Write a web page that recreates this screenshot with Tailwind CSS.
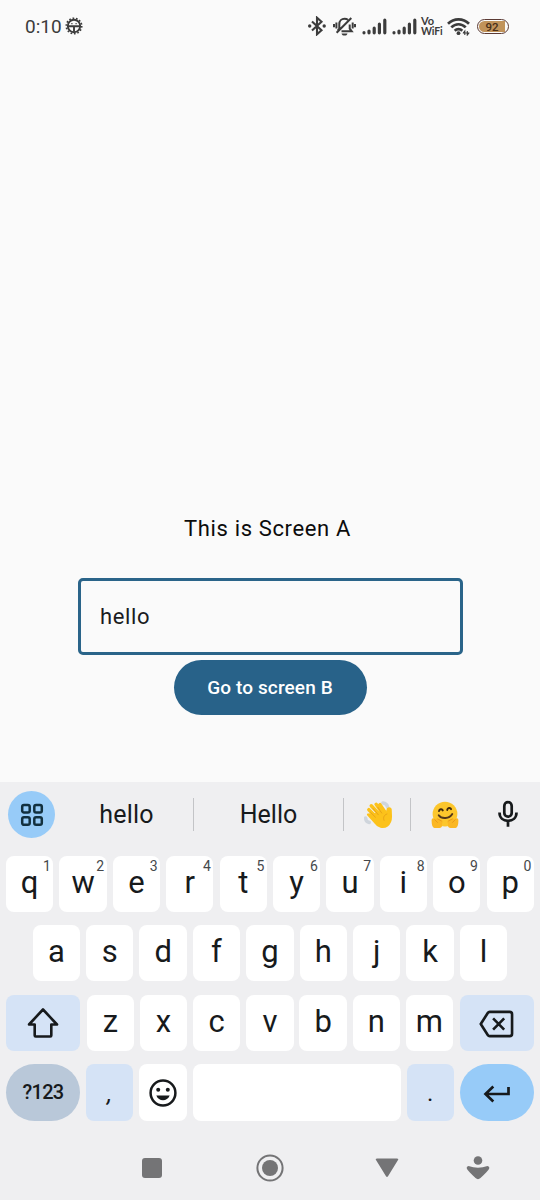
<!DOCTYPE html>
<html lang="en">
<head>
<meta charset="utf-8">
<title>Screen A</title>
<script src="https://cdn.jsdelivr.net/npm/@tailwindcss/browser@4"></script>
</head>
<body class="w-[540px] h-[1200px] overflow-hidden bg-[#fafafa] font-[Roboto,sans-serif] flex flex-col">
<header class="h-[52px] shrink-0 flex items-center pl-[25px] pr-[31px] text-[#3c3c3c]">
  <span class="text-[19px] leading-[22px] mt-[2px]">0:10</span>
  <svg class="ml-[3px]" width="18" height="18" viewBox="0 0 18 18" fill="none" stroke="currentColor"><circle cx="9" cy="9" r="6.2" stroke-width="1.900"/><circle cx="9" cy="9" r="7.700" stroke-width="1.700" stroke-dasharray="1.700 1.755"/><path d="M3 9.200h12M9 9.200v5.500" stroke-width="1.900"/><path d="M6.300 6.600h1.200M10.500 6.600h1.200" stroke-width="1.300"/></svg>
  <div class="ml-auto flex items-center">
    <svg width="18" height="20" viewBox="0 0 18 20" fill="none" stroke="currentColor" stroke-width="2.100"><path d="M4 5.500l9.500 8.800L9 18.300V1.700l4.500 4L4 14.500"/><circle cx="1.700" cy="10" r="1.700" fill="currentColor" stroke="none"/><circle cx="16.200" cy="10" r="1.700" fill="currentColor" stroke="none"/></svg>
    <svg class="ml-[7px]" width="23" height="20" viewBox="0 0 23 20" fill="none" stroke="currentColor" stroke-width="2"><path d="M6.300 12.500V8.200c0-3.500 2.400-5.400 5.200-5.400 1.400 0 2.500.3 3.400 1M16.700 8.500v4.200l2 2.600H8.500M3.600 16.800L18.300 2M6.300 12.500l-1.700 2.300M3.400 6.500v6M1 8v3.200M19.700 6.500v6M22 8v3.200"/><path d="M8.500 17.400h6c-.5 1.500-1.500 2.200-3 2.200s-2.500-.7-3-2.200z" fill="currentColor" stroke="none"/></svg>
    <svg class="ml-[6px]" width="25" height="18" viewBox="0 0 25 18" fill="none" stroke="currentColor" stroke-width="3.200" stroke-linecap="round"><path d="M2 15.700v.1M7 14v1.800M12.200 11.200v4.600M17.400 7.200v8.600M22.800 3.200v12.600"/></svg>
    <svg class="ml-[5px]" width="25" height="18" viewBox="0 0 25 18" fill="none" stroke="currentColor" stroke-width="3.200" stroke-linecap="round"><path d="M2 15.700v.1M7 14v1.800M12.200 11.200v4.600M17.400 7.200v8.600M22.800 3.200v12.600"/></svg>
    <div class="ml-[4px] w-[21px] flex flex-col text-[10.500px] leading-[11px] font-bold font-[Lato,sans-serif]"><span class="text-[11px]">Vo</span><span class="tracking-[-0.200px]">WiFi</span></div>
    <svg class="ml-[5px]" width="24" height="19" viewBox="0 0 24 19" fill="none" stroke="currentColor" stroke-width="2.700"><path d="M1 6.800c6-6 15-6 21 0M4.300 10.400c4.200-4.200 10.200-4.200 14.400 0M7.700 13.700c2.200-2.200 5.400-2.200 7.600 0"/><circle cx="11.500" cy="16.200" r="1.900" fill="currentColor" stroke="none"/><path d="M17.800 18v-4l-1.600 2M20.300 14v4l1.700-2M15.800 16h6.600" stroke-width="1.100"/></svg>
    <div class="ml-[6px] w-[32px] h-[15px] rounded-full border border-[#5b3a34] p-px flex"><span class="w-[26px] h-[11px] rounded-l-full rounded-r-[2px] bg-[#c1935a] text-[11.500px] leading-[12px] font-medium text-center text-[#4a2f18]">92</span></div>
  </div>
</header>

<main class="h-[730px] shrink-0 flex flex-col items-center">
  <h1 class="mt-[462px] h-[30px] -ml-[5px] text-[22px] leading-[30px] tracking-[0.640px] text-[#0c0c0c] whitespace-nowrap">This is Screen A</h1>
  <div class="mt-[34px] w-[385px] h-[77px] rounded-[5px] border-[3px] border-[#2a6489] flex items-center pl-[19.500px] text-[22px] tracking-[0.600px] text-[#1b1c1e]">hello</div>
  <button class="mt-[5px] w-[193px] h-[55px] pt-[2px] rounded-full bg-[#286289] text-white text-[19px] font-medium tracking-[0.120px]">Go to screen B</button>
</main>

<section class="h-[418px] shrink-0 bg-[#efeff1] text-[#171a1c]">
  <div class="h-[65px] flex items-center pl-[8px] pr-[22px] text-[25px]">
    <div class="size-[47px] rounded-full bg-[#97cbf8] flex items-center justify-center">
      <svg width="24" height="24" viewBox="0 0 24 24" fill="none" stroke="#12303f" stroke-width="2.500"><rect x="2.200" y="2" width="7.500" height="7.500" rx="1.800"/><rect x="14.300" y="2" width="7.500" height="7.500" rx="1.800"/><rect x="2.200" y="14.300" width="7.500" height="7.500" rx="1.800"/><rect x="14.300" y="14.300" width="7.500" height="7.500" rx="1.800"/></svg>
    </div>
    <span class="w-[138px] pl-[5px] pt-px text-center tracking-[0.200px]">hello</span>
    <i class="w-px h-[33px] bg-[#c3c4c7]"></i>
    <span class="w-[149px] pt-px text-center">Hello</span>
    <i class="w-px h-[33px] bg-[#c3c4c7]"></i>
    <span class="w-[66px] pl-[3px] flex justify-center">
      <svg width="29" height="29" viewBox="0 0 30 30" fill="none" stroke-linecap="round" stroke-linejoin="round"><path d="M19.500 3c2.800.2 4.500 2 5 4.500M1.700 18.500c0 2.500 1.300 4.200 3.800 4.700" stroke="#cfd5dc" stroke-width="3.600"/><path d="M5 10l8 8M7.500 6l8.500 9M12.500 4.500l6.500 9M16.500 4.800l6 9" stroke="#fcc21b" stroke-width="3.600"/><path d="M4 15l7 8c3.500 5 9 6.500 13 3.500 3.500-2.700 4-6 4-9.500l-.3-7c-.2-2.400-3.400-2-3.600.3l-.5 4.200-5-3-6.500 3z" fill="#fcc21b" stroke="#fcc21b" stroke-width="2"/><path d="M6.800 12.800l5 5M9.500 9l5.300 6.300M14.300 7.500l4 6M23.700 14.500c-3 1-4.200 3.500-3 6.500" stroke="#e59e17" stroke-width=".9"/></svg>
    </span>
    <i class="w-px h-[33px] bg-[#c3c4c7]"></i>
    <span class="w-[67px] flex justify-center">
      <svg width="30" height="29" viewBox="0 0 30 30" fill="none" stroke-linecap="round"><circle cx="15" cy="14.500" r="12.800" fill="#fcc62c"/><path d="M8.500 15.800c3 4.300 11 3.800 14-1.300" stroke="#53371a" stroke-width="2"/><path d="M8.800 11.500c.4-2.300 3.200-2.600 3.900-.7M17.300 10.300c.3-2.300 3.200-2.700 4-.8" stroke="#422b0d" stroke-width="2"/><path d="M1.200 22.500c-.5-3.500 1.600-4.500 3.300-2.500l2.500-.8 4.200 1.400c1.500.6 1.800 2 .8 3.500l-.2 3.200c-.6 1.400-1.800 1.700-3.800 1.700H4c-2-.6-2.800-3.500-2.800-6.500z" fill="#fbb723"/><path d="M28.800 22.500c.5-3.500-1.600-4.500-3.300-2.500l-2.500-.8-4.200 1.400c-1.500.6-1.800 2-.8 3.500l.2 3.200c.6 1.400 1.800 1.700 3.800 1.700H26c2-.6 2.800-3.500 2.800-6.500z" fill="#fbb723"/><path d="M4.500 20.500l2.700 2.700M7.500 19.600l3.700 2M25.500 20.500l-2.700 2.700M22.500 19.600l-3.700 2" stroke="#e39117" stroke-width=".8"/></svg>
    </span>
    <svg class="ml-auto -mt-px" width="20" height="28" viewBox="0 0 20 28" fill="none" stroke="currentColor" stroke-width="2.700"><rect x="6.300" y="2.200" width="7.400" height="14.500" rx="3.700"/><path d="M1.500 12.500c0 5.500 4 8.300 8.500 8.300s8.500-2.800 8.500-8.300M10 20.800v6"/></svg>
  </div>

  <div class="flex flex-col gap-[13.500px] pt-[8.500px] pl-[6px] pr-[6.200px] text-[31px] leading-[31px]">
    <div class="flex justify-between h-[56px] *:relative *:w-[47.300px] *:rounded-[8px] *:bg-white *:pb-[3px] *:flex *:items-center *:justify-center">
      <span>q<sup class="absolute right-[2.500px] top-[3.500px] text-[14px] leading-[14px] text-[#45484b]">1</sup></span>
      <span>w<sup class="absolute right-[2.500px] top-[3.500px] text-[14px] leading-[14px] text-[#45484b]">2</sup></span>
      <span>e<sup class="absolute right-[2.500px] top-[3.500px] text-[14px] leading-[14px] text-[#45484b]">3</sup></span>
      <span>r<sup class="absolute right-[2.500px] top-[3.500px] text-[14px] leading-[14px] text-[#45484b]">4</sup></span>
      <span>t<sup class="absolute right-[2.500px] top-[3.500px] text-[14px] leading-[14px] text-[#45484b]">5</sup></span>
      <span>y<sup class="absolute right-[2.500px] top-[3.500px] text-[14px] leading-[14px] text-[#45484b]">6</sup></span>
      <span>u<sup class="absolute right-[2.500px] top-[3.500px] text-[14px] leading-[14px] text-[#45484b]">7</sup></span>
      <span>i<sup class="absolute right-[2.500px] top-[3.500px] text-[14px] leading-[14px] text-[#45484b]">8</sup></span>
      <span>o<sup class="absolute right-[2.500px] top-[3.500px] text-[14px] leading-[14px] text-[#45484b]">9</sup></span>
      <span>p<sup class="absolute right-[2.500px] top-[3.500px] text-[14px] leading-[14px] text-[#45484b]">0</sup></span>
    </div>
    <div class="flex justify-between px-[26.700px] h-[56px] *:w-[47.300px] *:rounded-[8px] *:bg-white *:pb-[3px] *:flex *:items-center *:justify-center">
      <span>a</span><span>s</span><span>d</span><span>f</span><span>g</span><span>h</span><span>j</span><span>k</span><span>l</span>
    </div>
    <div class="flex justify-between h-[56px]">
      <div class="w-[74px] rounded-[8px] bg-[#d5e3f6] flex items-center justify-center">
        <svg width="32" height="30" viewBox="0 0 32 30" fill="none" stroke="currentColor" stroke-width="2.600" stroke-linejoin="round"><path d="M16 1.500L30 16.500H24.300V27.500Q24.300 28.500 23.300 28.500H8.700Q7.700 28.500 7.700 27.500V16.500H2z"/></svg>
      </div>
      <div class="flex gap-[5.900px] *:w-[47.300px] *:rounded-[8px] *:bg-white *:pb-[3px] *:flex *:items-center *:justify-center">
        <span>z</span><span>x</span><span>c</span><span>v</span><span>b</span><span>n</span><span>m</span>
      </div>
      <div class="w-[74px] rounded-[8px] bg-[#d5e3f6] flex items-center justify-center">
        <svg class="mt-[2px]" width="35" height="28" viewBox="0 0 36 28" fill="none" stroke="currentColor" stroke-width="2.700" stroke-linejoin="round"><path d="M11 1.500H31.500Q34 1.500 34 4V24Q34 26.500 31.500 26.500H11Q9.800 26.500 9 25.300L1.800 14L9 2.700Q9.800 1.500 11 1.500zM14.500 8.200l11.400 11.600M25.900 8.200L14.500 19.800"/></svg>
      </div>
    </div>
    <div class="flex justify-between h-[57px]">
      <div class="w-[74px] rounded-full bg-[#b9c8d9] flex items-center justify-center text-[20px] tracking-[-0.700px] font-medium">?123</div>
      <div class="w-[47.300px] rounded-[8px] bg-[#d5e3f6] flex items-center justify-center text-[24px] pt-[3px] italic">,</div>
      <div class="w-[47.300px] rounded-[8px] bg-white flex items-center justify-center">
        <svg width="28" height="28" viewBox="0 0 28 28" fill="none"><circle cx="14" cy="14" r="12.400" stroke="#171a1c" stroke-width="2.500"/><circle cx="9.200" cy="10.800" r="2" fill="#171a1c"/><circle cx="18.800" cy="10.800" r="2" fill="#171a1c"/><path d="M7.300 16.500h13.400c-1.400 3.400-3.800 4.700-6.700 4.700s-5.300-1.300-6.700-4.700z" fill="#171a1c"/></svg>
      </div>
      <div class="w-[208px] rounded-[8px] bg-white"></div>
      <div class="w-[47.300px] rounded-[8px] bg-[#d5e3f6] flex items-center justify-center text-[24px] pt-[2px]">.</div>
      <div class="w-[74px] rounded-full bg-[#97cbf8] flex items-center justify-center">
        <svg class="mt-[2px]" width="28" height="18" viewBox="0 0 28 18" fill="none" stroke="currentColor" stroke-width="2.700"><path d="M10.300 1.500L2.500 9l7.800 7.500M2.500 9H25.500V2"/></svg>
      </div>
    </div>
  </div>

  <nav class="mt-[32.500px] h-[28px] flex items-center pl-[141.500px] pr-[50.500px] text-[#747476]">
    <i class="size-[20px] rounded-[3px] bg-current"></i>
    <svg class="ml-[94px]" width="28" height="28" viewBox="0 0 28 28" fill="none" stroke="currentColor" stroke-width="2"><circle cx="14" cy="14" r="12.600"/><circle cx="14" cy="14" r="8" fill="currentColor" stroke="none"/></svg>
    <svg class="ml-[91.500px]" width="24" height="20" viewBox="0 0 24 20" fill="currentColor"><path d="M2 .5H22Q24 .5 23 2L13 18.200Q12 19.800 11 18.200L1 2Q0 .5 2 .5z"/></svg>
    <svg class="ml-auto" width="24" height="26" viewBox="0 0 24 26" fill="currentColor"><circle cx="12" cy="5.500" r="4.300"/><path d="M2.500 11Q0 11.500 1 14Q2 16 9.500 23Q12 25.300 14.500 23Q22 16 23 14Q24 11.500 21.500 11Q12 14.500 2.500 11z"/></svg>
  </nav>
</section>
</body>
</html>
